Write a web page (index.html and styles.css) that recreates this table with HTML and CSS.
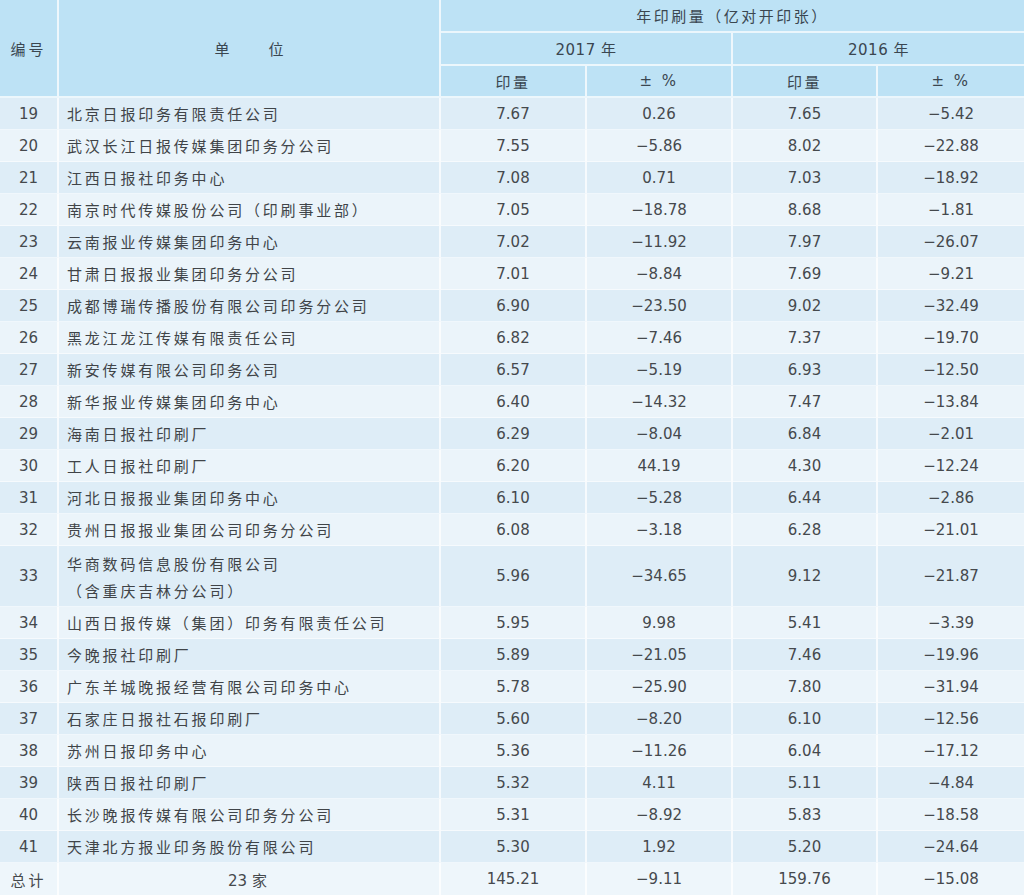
FILE: index.html
```html
<!DOCTYPE html>
<html lang="zh">
<head>
<meta charset="utf-8">
<title>年印刷量</title>
<link rel="stylesheet" href="styles.css">
</head>
<body>
<div class="sheet">
  <div class="hd c-no span3">编号</div>
  <div class="hd c-name span3 wide">单　位</div>
  <div class="hd c-top">年印刷量（亿对开印张）</div>
  <div class="hd c-y17">2017 年</div>
  <div class="hd c-y16">2016 年</div>
  <div class="hd">印量</div>
  <div class="hd">± %</div>
  <div class="hd">印量</div>
  <div class="hd last">± %</div>

  <div class="row a"><div>19</div><div class="name">北京日报印务有限责任公司</div><div>7.67</div><div>0.26</div><div>7.65</div><div class="last">−5.42</div></div>
  <div class="row b"><div>20</div><div class="name">武汉长江日报传媒集团印务分公司</div><div>7.55</div><div>−5.86</div><div>8.02</div><div class="last">−22.88</div></div>
  <div class="row a"><div>21</div><div class="name">江西日报社印务中心</div><div>7.08</div><div>0.71</div><div>7.03</div><div class="last">−18.92</div></div>
  <div class="row b"><div>22</div><div class="name">南京时代传媒股份公司（印刷事业部）</div><div>7.05</div><div>−18.78</div><div>8.68</div><div class="last">−1.81</div></div>
  <div class="row a"><div>23</div><div class="name">云南报业传媒集团印务中心</div><div>7.02</div><div>−11.92</div><div>7.97</div><div class="last">−26.07</div></div>
  <div class="row b"><div>24</div><div class="name">甘肃日报报业集团印务分公司</div><div>7.01</div><div>−8.84</div><div>7.69</div><div class="last">−9.21</div></div>
  <div class="row a"><div>25</div><div class="name">成都博瑞传播股份有限公司印务分公司</div><div>6.90</div><div>−23.50</div><div>9.02</div><div class="last">−32.49</div></div>
  <div class="row b"><div>26</div><div class="name">黑龙江龙江传媒有限责任公司</div><div>6.82</div><div>−7.46</div><div>7.37</div><div class="last">−19.70</div></div>
  <div class="row a"><div>27</div><div class="name">新安传媒有限公司印务公司</div><div>6.57</div><div>−5.19</div><div>6.93</div><div class="last">−12.50</div></div>
  <div class="row b"><div>28</div><div class="name">新华报业传媒集团印务中心</div><div>6.40</div><div>−14.32</div><div>7.47</div><div class="last">−13.84</div></div>
  <div class="row a"><div>29</div><div class="name">海南日报社印刷厂</div><div>6.29</div><div>−8.04</div><div>6.84</div><div class="last">−2.01</div></div>
  <div class="row b"><div>30</div><div class="name">工人日报社印刷厂</div><div>6.20</div><div>44.19</div><div>4.30</div><div class="last">−12.24</div></div>
  <div class="row a"><div>31</div><div class="name">河北日报报业集团印务中心</div><div>6.10</div><div>−5.28</div><div>6.44</div><div class="last">−2.86</div></div>
  <div class="row b"><div>32</div><div class="name">贵州日报报业集团公司印务分公司</div><div>6.08</div><div>−3.18</div><div>6.28</div><div class="last">−21.01</div></div>
  <div class="row a"><div>33</div><div class="name two">华商数码信息股份有限公司<br>（含重庆吉林分公司）</div><div>5.96</div><div>−34.65</div><div>9.12</div><div class="last">−21.87</div></div>
  <div class="row b"><div>34</div><div class="name">山西日报传媒（集团）印务有限责任公司</div><div>5.95</div><div>9.98</div><div>5.41</div><div class="last">−3.39</div></div>
  <div class="row a"><div>35</div><div class="name">今晚报社印刷厂</div><div>5.89</div><div>−21.05</div><div>7.46</div><div class="last">−19.96</div></div>
  <div class="row b"><div>36</div><div class="name">广东羊城晚报经营有限公司印务中心</div><div>5.78</div><div>−25.90</div><div>7.80</div><div class="last">−31.94</div></div>
  <div class="row a"><div>37</div><div class="name">石家庄日报社石报印刷厂</div><div>5.60</div><div>−8.20</div><div>6.10</div><div class="last">−12.56</div></div>
  <div class="row b"><div>38</div><div class="name">苏州日报印务中心</div><div>5.36</div><div>−11.26</div><div>6.04</div><div class="last">−17.12</div></div>
  <div class="row a"><div>39</div><div class="name">陕西日报社印刷厂</div><div>5.32</div><div>4.11</div><div>5.11</div><div class="last">−4.84</div></div>
  <div class="row b"><div>40</div><div class="name">长沙晚报传媒有限公司印务分公司</div><div>5.31</div><div>−8.92</div><div>5.83</div><div class="last">−18.58</div></div>
  <div class="row a"><div>41</div><div class="name">天津北方报业印务股份有限公司</div><div>5.30</div><div>1.92</div><div>5.20</div><div class="last">−24.64</div></div>
  <div class="row t"><div class="cjk">总计</div><div class="center"><span>23&nbsp;<span class="cjk">家</span></span></div><div>145.21</div><div>−9.11</div><div>159.76</div><div class="last">−15.08</div></div>
</div>
</body>
</html>
```
FILE: styles.css
```css
html, body {
  margin: 0;
  padding: 0;
  background: #eef6fb;
}

.sheet {
  width: 1024px;
  display: grid;
  grid-template-columns: 59px 382px 146px 146px 145px 146px;
  grid-template-rows: 33px 33px 32px repeat(14, 32px) 61px repeat(8, 32px) 32px;
  font-family: "DejaVu Sans", "Noto Sans CJK SC", sans-serif;
  font-size: 15px;
  color: #45494d;
}

.sheet > div,
.row > div {
  box-sizing: border-box;
  display: flex;
  align-items: center;
  justify-content: center;
  border-right: 2px solid rgba(255, 255, 255, 0.75);
  border-bottom: 1px solid rgba(255, 255, 255, 0.55);
  white-space: nowrap;
}

.sheet > .row {
  display: contents;
}

.hd {
  background: #bde2f5;
  font-family: "DejaVu Sans", "Noto Sans CJK SC", sans-serif;
  letter-spacing: 2.5px;
  color: #3a4650;
  border-bottom: 2px solid rgba(255, 255, 255, 0.7) !important;
}

.c-no { grid-column: 1; grid-row: 1 / span 3; letter-spacing: 3px; }
.c-name { grid-column: 2; grid-row: 1 / span 3; letter-spacing: 12px; padding-left: 12px; }
.c-top { grid-column: 3 / span 4; grid-row: 1; border-right: none !important; }
.c-y17 { grid-column: 3 / span 2; grid-row: 2; letter-spacing: 0.5px; }
.c-y16 { grid-column: 5 / span 2; grid-row: 2; letter-spacing: 0.5px; border-right: none !important; }

.sheet .last { border-right: none; }

.row.a > div { background: #deedf7; }
.row.b > div { background: #ebf4fa; }
.row.t > div { background: #eef6fb; border-bottom: none; }

.row > .name {
  justify-content: flex-start;
  padding-left: 8px;
  font-family: "Noto Sans CJK SC", sans-serif;
  letter-spacing: 2.8px;
  color: #404448;
}

.row > .name.two {
  display: block;
  padding-top: 4px;
  line-height: 27px;
}

.cjk {
  font-family: "Noto Sans CJK SC", sans-serif;
  letter-spacing: 3px;
}

.row > .center { justify-content: center; }
```
